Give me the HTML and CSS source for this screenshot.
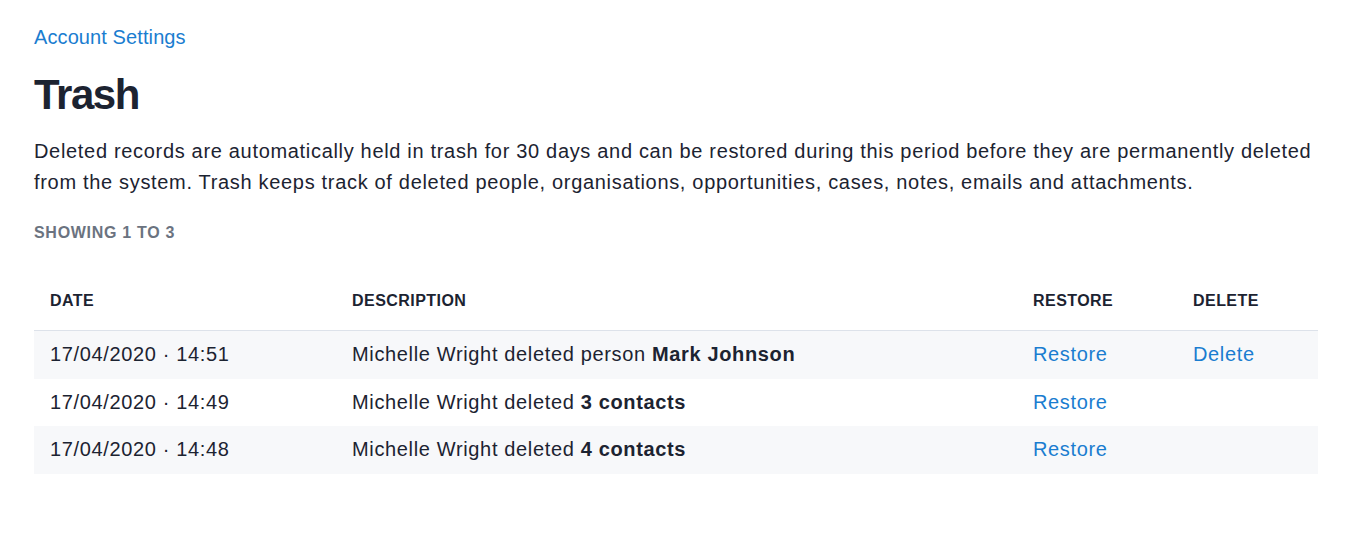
FILE: index.html
```html
<!DOCTYPE html>
<html>
<head>
<meta charset="utf-8">
<link rel="stylesheet" href="styles.css">
</head>
<body>
<main class="page">
  <a class="crumb" href="#">Account Settings</a>
  <h1 class="title">Trash</h1>
  <p class="intro">Deleted records are automatically held in trash for 30 days and can be restored during this period before they are permanently deleted from the system. Trash keeps track of deleted people, organisations, opportunities, cases, notes, emails and attachments.</p>
  <div class="count">SHOWING 1 TO 3</div>
  <table class="trash">
    <colgroup>
      <col class="c-date">
      <col class="c-desc">
      <col class="c-restore">
      <col class="c-delete">
    </colgroup>
    <thead>
      <tr>
        <th>DATE</th>
        <th>DESCRIPTION</th>
        <th>RESTORE</th>
        <th>DELETE</th>
      </tr>
    </thead>
    <tbody>
      <tr>
        <td>17/04/2020 · 14:51</td>
        <td>Michelle Wright deleted person <b>Mark Johnson</b></td>
        <td><a href="#">Restore</a></td>
        <td><a href="#">Delete</a></td>
      </tr>
      <tr>
        <td>17/04/2020 · 14:49</td>
        <td>Michelle Wright deleted <b>3 contacts</b></td>
        <td><a href="#">Restore</a></td>
        <td></td>
      </tr>
      <tr>
        <td>17/04/2020 · 14:48</td>
        <td>Michelle Wright deleted <b>4 contacts</b></td>
        <td><a href="#">Restore</a></td>
        <td></td>
      </tr>
    </tbody>
  </table>
</main>
</body>
</html>
```
FILE: styles.css
```css
html, body {
  margin: 0;
  padding: 0;
  background: #ffffff;
}
body {
  font-family: "Liberation Sans", Arial, sans-serif;
  color: #1c2331;
}
.page {
  padding: 25px 48px 0 34px;
}
.crumb {
  display: block;
  font-size: 20px;
  line-height: 24px;
  letter-spacing: 0.1px;
  color: #1a7dd0;
  text-decoration: none;
}
.title {
  margin: 21px 0 0;
  font-size: 42px;
  line-height: 50px;
  letter-spacing: -1.4px;
  font-weight: bold;
  color: #1c2331;
}
.intro {
  margin: 16px 0 0;
  font-size: 20px;
  line-height: 31px;
  letter-spacing: 0.68px;
}
.count {
  margin-top: 26px;
  font-size: 16px;
  line-height: 18px;
  letter-spacing: 0.7px;
  font-weight: bold;
  color: #6b7380;
}
.trash {
  margin-top: 29px;
  width: 100%;
  table-layout: fixed;
  border-collapse: collapse;
  font-size: 20px;
  letter-spacing: 0.65px;
}
.trash th {
  text-align: left;
  font-size: 16px;
  letter-spacing: 0.45px;
  font-weight: bold;
  height: 59px;
  padding: 0 16px;
  border-bottom: 1px solid #dde2ea;
  vertical-align: middle;
}
.trash td {
  height: 47.5px;
  padding: 0 16px;
  vertical-align: middle;
}
.trash tbody tr:nth-child(odd) {
  background: #f7f8fa;
}
.trash b {
  font-weight: bold;
}
.trash a {
  color: #1a7dd0;
  text-decoration: none;
}
.c-date { width: 302px; }
.c-restore { width: 160px; }
.c-delete { width: 141px; }
```
